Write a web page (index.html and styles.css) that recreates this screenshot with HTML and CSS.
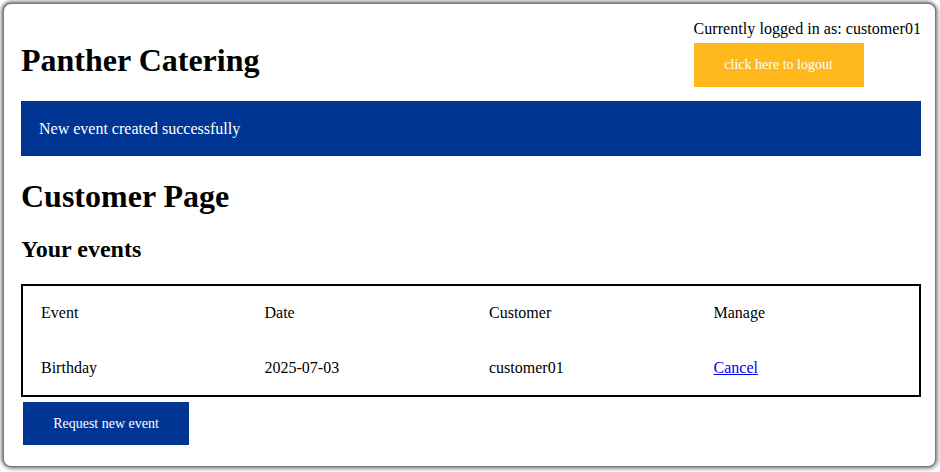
FILE: index.html
```html
<!DOCTYPE html>
<html>
<head>
<meta charset="utf-8">
<title>Panther Catering</title>
<link rel="stylesheet" href="styles.css">
</head>
<body>
<div class="window">
  <header class="top">
    <h1 class="brand">Panther Catering</h1>
    <div class="account">
      <div class="who">Currently logged in as: customer01</div>
      <a class="btn btn-gold" href="#">click here to logout</a>
    </div>
  </header>
  <div class="flash">New event created successfully</div>
  <h1 class="page-title">Customer Page</h1>
  <h2 class="section-title">Your events</h2>
  <table class="events">
    <tr><td>Event</td><td>Date</td><td>Customer</td><td>Manage</td></tr>
    <tr><td>Birthday</td><td>2025-07-03</td><td>customer01</td><td><a href="#" class="link">Cancel</a></td></tr>
  </table>
  <a class="btn btn-blue" href="#">Request new event</a>
</div>
</body>
</html>
```
FILE: styles.css
```css
html, body {
  margin: 0;
  padding: 0;
  background: #ffffff;
}
body {
  font-family: "Liberation Serif", "Times New Roman", serif;
  font-size: 16px;
  color: #000;
  padding: 4px 5px 6px 4px;
}
.window {
  height: 462px;
  box-sizing: border-box;
  border-radius: 7px;
  box-shadow: 0 0 0 1px #7a7a7a, -1px -1px 3px 2px rgba(0,0,0,0.35), 1px 1px 4px 2px rgba(0,0,0,0.4);
  background: #fff;
  padding: 16px 14px 0 17px;
  overflow: hidden;
}
.top {
  display: flex;
  justify-content: space-between;
  align-items: flex-start;
}
.brand {
  font-size: 32px;
  font-weight: bold;
  margin: 22px 0 0 0;
}
.account {
  display: flex;
  flex-direction: column;
  align-items: flex-start;
}
.who {
  line-height: 18px;
  letter-spacing: 0.05px;
}
.btn {
  display: inline-block;
  font-size: 14px;
  line-height: 16px;
  color: #fff;
  text-decoration: none;
  text-align: center;
}
.btn-gold {
  background: #ffb81c;
  width: 170px;
  padding: 14px 0;
  margin-top: 5px;
  margin-left: 0;
}
.btn-blue {
  background: #003594;
  width: 166px;
  padding: 14px 0 13px;
  margin: 5px 0 0 2px;
}
.flash {
  background: #003594;
  color: #fff;
  height: 55px;
  line-height: 55px;
  padding: 0 18px;
  margin-top: 14px;
}
.page-title {
  font-size: 32px;
  font-weight: bold;
  margin: 22px 0 0 0;
  line-height: 37px;
}
.section-title {
  font-size: 24px;
  font-weight: bold;
  margin: 20px 0 0 0;
  line-height: 28px;
}
.events {
  width: 100%;
  border: 2px solid #000;
  border-collapse: collapse;
  table-layout: fixed;
  margin-top: 21px;
}
.events td {
  padding: 18px 18px;
  line-height: 18.5px;
  text-align: left;
}
.link {
  color: #0000ee;
  text-decoration: underline;
}
```
